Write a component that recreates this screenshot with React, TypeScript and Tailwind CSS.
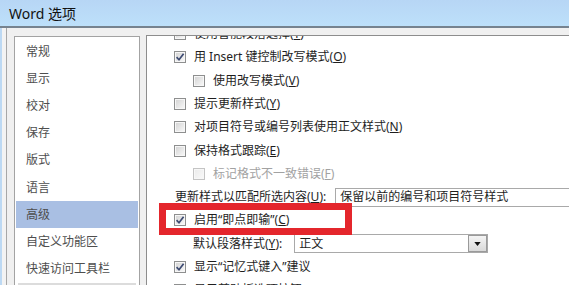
import type { ReactNode } from 'react';

const font = { fontFamily: '"Noto Sans", "Noto Sans CJK SC", sans-serif' };

const navItems = ['常规', '显示', '校对', '保存', '版式', '语言', '高级', '自定义功能区', '快速访问工具栏'];

function Check({ checked, disabled }: { checked?: boolean; disabled?: boolean }) {
  return (
    <span className={`flex h-[12px] w-[12px] shrink-0 items-center justify-center border ${disabled ? 'border-[#c4c4c4]' : 'border-[#8e8f8f]'} bg-[#f7f7f7]`}>
      <span className={`relative h-[8px] w-[8px] bg-gradient-to-br ${disabled ? 'from-[#ececec] to-[#f8f8f8]' : 'from-[#d6d6d6] to-[#f6f6f6]'}`}>
        {checked ? (
          <svg viewBox="0 0 10 10" className="absolute left-[-1px] top-[-1px] h-[10px] w-[10px]">
            <path d="M1.6 5.2 L4 7.8 L8.6 1.8" fill="none" stroke="#3c4a72" strokeWidth="1.7" />
          </svg>
        ) : null}
      </span>
    </span>
  );
}

function Row({ checked, indent, disabled, children }: { checked?: boolean; indent?: boolean; disabled?: boolean; children: ReactNode }) {
  return (
    <div className={`flex h-[23.3px] items-center gap-[8px] ${indent ? 'pl-[46px]' : 'pl-[27px]'}`}>
      <Check checked={checked} disabled={disabled} />
      <span className={`whitespace-nowrap text-[12px] leading-none ${disabled ? 'text-[#a2a2a2]' : 'text-[#1e1e1e]'}`}>{children}</span>
    </div>
  );
}

function Select({ value, width, button }: { value: string; width: string; button?: boolean }) {
  return (
    <div className={`flex h-[19px] shrink-0 items-center justify-between border border-[#a9a9a9] bg-white pl-[4px] ${width}`}>
      <span className="whitespace-nowrap text-[12px] leading-none text-[#1e1e1e]">{value}</span>
      {button ? (
        <span className="flex h-[17px] w-[19px] items-center justify-center border border-[#9a9a9a] bg-gradient-to-b from-[#f4f4f4] to-[#d9d9d9]">
          <svg viewBox="0 0 8 5" className="h-[4px] w-[7px]">
            <path d="M0 0 L8 0 L4 5 Z" fill="#111" />
          </svg>
        </span>
      ) : null}
    </div>
  );
}

export default function App() {
  return (
    <div className="flex h-[285px] w-[569px] flex-col overflow-hidden bg-[#bdd9f3]" style={font}>
      <div className="flex h-[26px] shrink-0 items-center bg-gradient-to-b from-[#b7d6f5] to-[#bde0fa] pl-[9px] text-[14px] text-[#111]">
        Word 选项
      </div>
      <div className="flex flex-1 border-t-2 border-[#76838f] pl-[2px]">
        <div className="flex flex-1 bg-[#f3f3f3] pl-[4px]">
          <div className="flex flex-1 gap-[6px] border-l border-[#a7a7a7] bg-[#f0f0f0] pl-[7px] pt-[7px]">
            <div className="mt-[1px] w-[126px] shrink-0 border border-[#a3a3a3] border-b-0 bg-white px-[1px] pt-[1.5px]">
              {navItems.map((item) => (
                <div
                  key={item}
                  className={`flex h-[27.1px] items-center pl-[10px] text-[12px] leading-none text-[#4e4e4e] ${item === '高级' ? 'bg-[#a9bfe3]' : ''}`}
                >
                  {item}
                </div>
              ))}
              <div className="mx-[2px] mt-[1px] h-[3px] bg-[#dcdcdc]" />
            </div>
            <div className="relative flex-1 overflow-hidden border-l border-t border-[#8d8d8d] bg-white">
              <div className="mt-[-13.6px]">
                <Row>使用智能段落选择(<u>T</u>)</Row>
                <Row checked>
                  用 Insert 键控制改写模式(<u>O</u>)
                </Row>
                <Row indent>
                  使用改写模式(<u>V</u>)
                </Row>
                <Row>
                  提示更新样式(<u>Y</u>)
                </Row>
                <Row>
                  对项目符号或编号列表使用正文样式(<u>N</u>)
                </Row>
                <Row>
                  保持格式跟踪(<u>E</u>)
                </Row>
                <Row indent disabled>
                  标记格式不一致错误(<u>F</u>)
                </Row>
                <div className="flex h-[23.3px] items-center gap-[9px] pl-[28px]">
                  <span className="whitespace-nowrap text-[12px] leading-none text-[#1e1e1e]">
                    更新样式以匹配所选内容(<u>U</u>):
                  </span>
                  <Select value="保留以前的编号和项目符号样式" width="w-[240px]" />
                </div>
                <div className="relative">
                  <Row checked>
                    启用“即点即输”(<u>C</u>)
                  </Row>
                  <div className="absolute left-[12px] top-[-6px] h-[32px] w-[193px] border-[7px] border-[#e4262c]" />
                </div>
                <div className="flex h-[23.3px] items-center gap-[12px] pl-[46px]">
                  <span className="whitespace-nowrap text-[12px] leading-none text-[#1e1e1e]">
                    默认段落样式(<u>Y</u>):
                  </span>
                  <Select value="正文" width="w-[194px]" button />
                </div>
                <Row checked>显示“记忆式键入”建议</Row>
                <Row>显示剪贴板选项按钮</Row>
              </div>
            </div>
          </div>
        </div>
      </div>
    </div>
  );
}
